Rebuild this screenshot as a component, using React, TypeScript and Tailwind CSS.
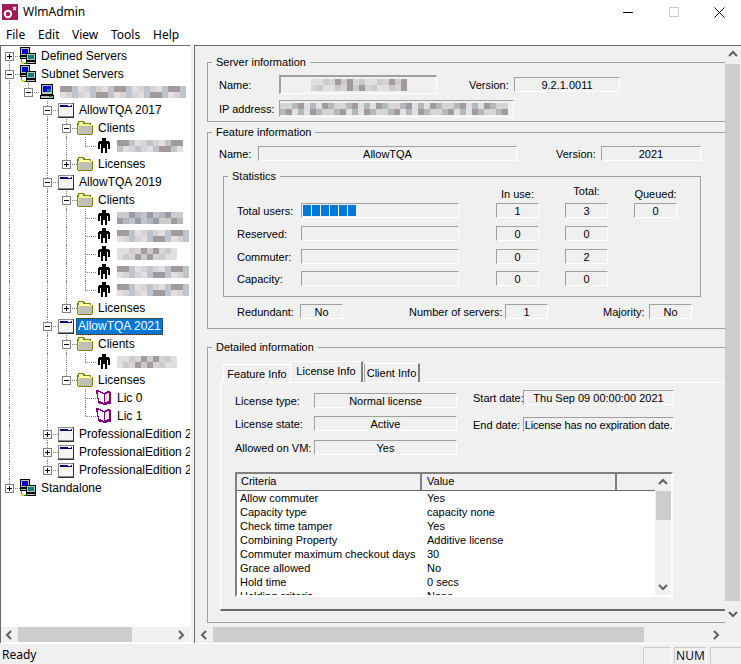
import type { ReactNode } from "react";

interface TreeNode {
	label?: string;
	blur?: number;
	icon: "network" | "computer" | "window" | "folder" | "person" | "book";
	open?: boolean;
	selected?: boolean;
	children?: TreeNode[];
}

const clientsOf = (widths: number[]): TreeNode => ({
	label: "Clients",
	icon: "folder",
	open: true,
	children: widths.map((w) => ({ blur: w, icon: "person" as const })),
});

const closedLicenses: TreeNode = { label: "Licenses", icon: "folder", children: [{ label: "x", icon: "book" }], open: false };

const pro: TreeNode = { label: "ProfessionalEdition 2", icon: "window", children: [{ label: "x", icon: "folder" }], open: false };

const tree: TreeNode[] = [
	{ label: "Defined Servers", icon: "network", children: [{ label: "x", icon: "computer" }], open: false },
	{
		label: "Subnet Servers",
		icon: "network",
		open: true,
		children: [
			{
				blur: 126,
				icon: "computer",
				open: true,
				children: [
					{ label: "AllowTQA 2017", icon: "window", open: true, children: [clientsOf([63]), closedLicenses] },
					{ label: "AllowTQA 2019", icon: "window", open: true, children: [clientsOf([65, 72, 60, 72, 72]), closedLicenses] },
					{
						label: "AllowTQA 2021",
						icon: "window",
						open: true,
						selected: true,
						children: [
							clientsOf([60]),
							{
								label: "Licenses",
								icon: "folder",
								open: true,
								children: [
									{ label: "Lic 0", icon: "book" },
									{ label: "Lic 1", icon: "book" },
								],
							},
						],
					},
					pro,
					pro,
					pro,
				],
			},
		],
	},
	{ label: "Standalone", icon: "network", children: [{ label: "x", icon: "computer" }], open: false },
];

const shades = ["#a39a9c", "#c4c0c2", "#b3b8bc", "#d8d4d6", "#9c9aa4", "#c9ccc8", "#e2dfe2", "#ada4a0", "#bfc4cc"];

function Mosaic({ width, rows = 2, size = 6 }: { width: number; rows?: number; size?: number }) {
	const cols = Math.ceil(width / size);
	const cells = [];
	for (let i = 0; i < cols * rows; i++) {
		const n = (width * 7 + i * i * 13 + i * 5) % shades.length;
		cells.push(<span key={i} style={{ backgroundColor: shades[n], width: size, height: size }} />);
	}
	return (
		<div className="flex shrink-0 flex-wrap overflow-hidden" style={{ width: cols * size }}>
			{cells}
		</div>
	);
}

function NodeIcon({ type }: { type: TreeNode["icon"] }) {
	if (type === "network") {
		return (
			<svg width="16" height="18" viewBox="0 0 16 18" shapeRendering="crispEdges" className="shrink-0">
				<rect x="1" y="9" width="1" height="6" fill="#808080" />
				<rect x="0.5" y="0.5" width="9" height="8" fill="#c0c0c0" stroke="#000" />
				<rect x="2" y="2" width="6" height="5" fill="#0000d0" />
				<rect x="0.5" y="9.5" width="9" height="2" fill="#c0c0c0" stroke="#000" />
				<rect x="6.5" y="6.5" width="9" height="7" fill="#c0c0c0" stroke="#000" />
				<rect x="8" y="8" width="6" height="4" fill="#008080" />
				<rect x="6.5" y="14.5" width="9" height="2" fill="#c0c0c0" stroke="#000" />
				<rect x="1" y="15" width="3" height="2" fill="#e8d800" />
				<rect x="4" y="16" width="3" height="1" fill="#008000" />
			</svg>
		);
	}
	if (type === "computer") {
		return (
			<svg width="16" height="16" viewBox="0 0 16 16" shapeRendering="crispEdges" className="shrink-0">
				<rect x="2.5" y="0.5" width="11" height="10" fill="#c0c0c0" stroke="#000" />
				<rect x="4" y="2" width="8" height="6" fill="#0000e0" />
				<rect x="8" y="5" width="4" height="3" fill="#008080" />
				<rect x="1.5" y="11.5" width="13" height="3" fill="#c0c0c0" stroke="#000" />
				<rect x="10" y="12" width="3" height="1" fill="#00a000" />
			</svg>
		);
	}
	if (type === "window") {
		return (
			<svg width="16" height="16" viewBox="0 0 16 16" shapeRendering="crispEdges" className="shrink-0">
				<rect x="0" y="1" width="16" height="15" fill="#303030" />
				<rect x="0" y="1" width="15" height="14" fill="#8c8c8c" />
				<rect x="1" y="2" width="14" height="12" fill="#f4f4f4" />
				<rect x="2" y="3" width="12" height="2" fill="#000080" />
				<rect x="10" y="3" width="3" height="1" fill="#ffffff" />
			</svg>
		);
	}
	if (type === "folder") {
		return (
			<svg width="16" height="16" viewBox="0 0 16 16" shapeRendering="crispEdges" className="shrink-0">
				<path d="M0 3h1V1h6v1h1v1h6v2h2v9h-1v1H1v-1H0z" fill="#808000" />
				<rect x="2" y="2" width="4" height="2" fill="#f0f0d0" />
				<rect x="2" y="4" width="11" height="1" fill="#ffff90" />
				<rect x="2" y="5" width="13" height="1" fill="#ffff90" />
				<rect x="2" y="6" width="13" height="8" fill="#c0c0b8" />
				<rect x="1" y="5" width="1" height="9" fill="#e0e0a0" />
			</svg>
		);
	}
	if (type === "person") {
		return (
			<svg width="16" height="16" viewBox="0 0 16 16" shapeRendering="crispEdges" className="shrink-0">
				<path d="M6 0h4v3h3v1h1v7h-2V6h-1v9H9v-5H7v5H5V6H4v5H2V4h1V3h3z" fill="#000" />
			</svg>
		);
	}
	return (
		<svg width="16" height="16" viewBox="0 0 16 16" shapeRendering="crispEdges" className="shrink-0">
			<path d="M0 0h3v1h2v1h2v1h2V2h2V1h3v1h1v12h-4v1H7v-1H3v-1H2V9H1V4H0z" fill="#800080" />
			<path d="M2 2h2v1h2v1h2v9H7v-1H5v-1H3V8H2z" fill="#ffffff" />
			<path d="M9 4h2V3h2v8h-2v1H9z" fill="#e4ecc0" />
		</svg>
	);
}

function TreeRows({ nodes, trail = [] }: { nodes: TreeNode[]; trail?: boolean[] }) {
	return (
		<>
			{nodes.map((node, i) => {
				const hasNext = i < nodes.length - 1;
				const hasBox = !!node.children;
				const rootFirst = trail.length === 0 && i === 0;
				return (
					<div key={i}>
						<div className="flex h-[18px] items-center">
							{trail.map((on, t) => (
								<div key={t} className="relative h-[18px] w-[19px] shrink-0">
									{on && <div className="absolute left-[9px] top-0 h-[18px] border-l border-dotted border-[#808080]" />}
								</div>
							))}
							<div className="relative h-[18px] w-[19px] shrink-0">
								{!rootFirst && <div className="absolute left-[9px] top-0 h-[9px] border-l border-dotted border-[#808080]" />}
								{hasNext && <div className="absolute left-[9px] top-[9px] h-[9px] border-l border-dotted border-[#808080]" />}
								<div className="absolute left-[9px] top-[9px] w-[11px] border-t border-dotted border-[#808080]" />
								{hasBox && (
									<div className="absolute left-[5px] top-[5px] flex h-[9px] w-[9px] items-center justify-center border border-[#808080] bg-white">
										<div className="h-px w-[5px] bg-black" />
										{!node.open && <div className="absolute h-[5px] w-px bg-black" />}
									</div>
								)}
							</div>
							<div className="ml-px">
								<NodeIcon type={node.icon} />
							</div>
							{node.blur ? (
								<div className="ml-[5px]">
									<Mosaic width={node.blur} />
								</div>
							) : (
								<span
									className={
										node.selected
											? "ml-[2px] h-[17px] whitespace-nowrap border border-dotted border-[#3a2a10] bg-[#0078d7] px-px leading-[15px] text-white"
											: "ml-[3px] whitespace-nowrap px-[2px] text-black"
									}
								>
									{node.label}
								</span>
							)}
						</div>
						{node.open && node.children && <TreeRows nodes={node.children} trail={[...trail, hasNext]} />}
					</div>
				);
			})}
		</>
	);
}

function Chevron({ dir, className = "" }: { dir: "up" | "down" | "left" | "right"; className?: string }) {
	const d = {
		up: "M1 6l4-4 4 4",
		down: "M1 3l4 4 4-4",
		left: "M7 1L3 5l4 4",
		right: "M3 1l4 4-4 4",
	}[dir];
	return (
		<svg width="10" height="10" viewBox="0 0 10 10" fill="none" stroke="#606060" strokeWidth="2" className={"shrink-0 " + className}>
			<path d={d} />
		</svg>
	);
}

function Field({ className, children }: { className: string; children?: ReactNode }) {
	return (
		<div className={"flex shrink-0 items-center justify-center overflow-hidden whitespace-nowrap border-t border-l border-t-[#a0a0a0] border-l-[#a0a0a0] border-r border-b border-r-white border-b-white " + className}>
			{children}
		</div>
	);
}

function Group({ title, className, children }: { title: string; className: string; children: ReactNode }) {
	return (
		<div className={"relative border border-[#a0a0a0] " + className}>
			<span className="absolute -top-[8px] left-[4px] whitespace-nowrap bg-[#f0f0f0] px-[4px] leading-[14px]">{title}</span>
			{children}
		</div>
	);
}

function StatRow({ label, className, bar, use, total, queued }: { label: string; className: string; bar?: number; use: string; total: string; queued?: string }) {
	return (
		<div className={"flex h-[15px] items-center pl-[13px] " + className}>
			<span className="w-[64px] shrink-0 whitespace-nowrap">{label}</span>
			<Field className="h-[15px] w-[158px] !justify-start gap-px pl-px">
				{Array.from({ length: bar ?? 0 }).map((_, i) => (
					<div key={i} className="h-[11px] w-[8px] bg-[#0078d7]" />
				))}
			</Field>
			<Field className="ml-[37px] h-[15px] w-[43px]">{use}</Field>
			<Field className="ml-[26px] h-[15px] w-[43px]">{total}</Field>
			{queued && <Field className="ml-[26px] h-[15px] w-[43px]">{queued}</Field>}
		</div>
	);
}

const criteria = [
	["Allow commuter", "Yes"],
	["Capacity type", "capacity none"],
	["Check time tamper", "Yes"],
	["Combining Property", "Additive license"],
	["Commuter maximum checkout days", "30"],
	["Grace allowed", "No"],
	["Hold time", "0 secs"],
	["Holding criteria", "None"],
];

export default function App() {
	return (
		<div className="flex h-[664px] w-[741px] flex-col overflow-hidden bg-[#f0f0f0] font-['Liberation_Sans',Arial,sans-serif] text-[12px] text-black">
			{/* title bar */}
			<div className="flex h-[24px] shrink-0 items-center bg-white pl-[2px]">
				<svg width="16" height="16" viewBox="0 0 16 16" className="shrink-0">
					<rect width="16" height="16" fill="#a3195b" />
					<circle cx="6" cy="10" r="3.2" fill="none" stroke="#fff" strokeWidth="2" />
					<path d="M11 3l3 3M14 3l-3 3" stroke="#fff" strokeWidth="1.2" />
				</svg>
				<span className="ml-[5px] font-['Noto_Sans',sans-serif] text-[12px]">WlmAdmin</span>
				<svg width="11" height="11" viewBox="0 0 11 11" className="ml-[538px] shrink-0">
					<path d="M0 5.5h10" stroke="#000" />
				</svg>
				<div className="ml-[35px] h-[10px] w-[10px] border border-[#cccccc]" />
				<svg width="11" height="11" viewBox="0 0 11 11" className="ml-[35px] shrink-0">
					<path d="M.5.5l10 10M10.5.5l-10 10" stroke="#000" />
				</svg>
			</div>
			{/* menu */}
			<div className="flex h-[21px] shrink-0 items-center bg-white pt-px font-['Noto_Sans',sans-serif] text-[12px]">
				<span className="ml-[6px] w-[32px]">File</span>
				<span className="w-[34px]">Edit</span>
				<span className="w-[39px]">View</span>
				<span className="w-[42px]">Tools</span>
				<span>Help</span>
			</div>
			{/* panes */}
			<div className="flex h-[599px] shrink-0 border-b border-white">
				<div className="flex w-[191px] shrink-0 flex-col border-t border-l border-r border-t-[#696969] border-l-[#696969] border-r-white bg-white">
					<div className="-ml-px h-[581px] overflow-hidden pt-px">
						<TreeRows nodes={tree} />
					</div>
					<div className="flex h-[15px] shrink-0 items-center bg-[#f0f0f0]">
						<Chevron dir="left" className="ml-[3px]" />
						<div className="ml-[4px] h-[15px] w-[114px] bg-[#cdcdcd]" />
						<Chevron dir="right" className="ml-[44px]" />
					</div>
				</div>
				<div className="ml-[3px] flex min-w-0 flex-1 flex-col border-t border-l border-[#696969] text-[11px] leading-[14px]">
					<div className="flex h-[581px] shrink-0">
						<div className="w-[530px] shrink-0 overflow-hidden">
							<Group title="Server information" className="ml-[12px] mt-[16px] h-[60px] w-[540px]">
								<div className="flex items-center pl-[11px] pt-[12px]">
									<span className="w-[60px]">Name:</span>
									<Field className="h-[19px] w-[158px] border-t-2 border-l-2 border-t-[#808080] border-l-[#808080]">
										<Mosaic width={96} size={6} />
									</Field>
									<span className="ml-[32px] w-[45px]">Version:</span>
									<Field className="h-[15px] w-[106px]">9.2.1.0011</Field>
								</div>
								<div className="mt-[6px] flex items-center pl-[11px]">
									<span className="w-[60px] whitespace-nowrap">IP address:</span>
									<Field className="h-[17px] w-[235px] !justify-start">
										<Mosaic width={228} rows={2} size={6} />
									</Field>
								</div>
							</Group>
							<Group title="Feature information" className="ml-[12px] mt-[10px] h-[197px] w-[540px]">
								<div className="flex items-center pl-[11px] pt-[13px]">
									<span className="w-[39px]">Name:</span>
									<Field className="h-[15px] w-[259px]">AllowTQA</Field>
									<span className="ml-[39px] w-[45px]">Version:</span>
									<Field className="h-[15px] w-[100px]">2021</Field>
								</div>
								<Group title="Statistics" className="ml-[15px] mt-[15px] h-[121px] w-[478px]">
									<div className="ml-[272px] flex h-[26px] items-start">
										<span className="mt-[10px] w-[43px] text-center">In use:</span>
										<span className="ml-[26px] mt-[7px] w-[43px] text-center">Total:</span>
										<span className="ml-[26px] mt-[10px] w-[43px] text-center">Queued:</span>
									</div>
									<StatRow label="Total users:" className="" bar={6} use="1" total="3" queued="0" />
									<StatRow label="Reserved:" className="mt-[8px]" use="0" total="0" />
									<StatRow label="Commuter:" className="mt-[8px]" use="0" total="2" />
									<StatRow label="Capacity:" className="mt-[7px]" use="0" total="0" />
								</Group>
								<div className="mt-[7px] flex items-center pl-[29px]">
									<span className="w-[63px]">Redundant:</span>
									<Field className="h-[15px] w-[43px]">No</Field>
									<span className="ml-[66px] w-[96px] whitespace-nowrap">Number of servers:</span>
									<Field className="h-[15px] w-[43px]">1</Field>
									<span className="ml-[55px] w-[46px]">Majority:</span>
									<Field className="h-[15px] w-[43px]">No</Field>
								</div>
							</Group>
							<Group title="Detailed information" className="ml-[12px] mt-[18px] h-[276px] w-[540px]">
								<div className="ml-[15px] mt-[13px] flex h-[21px] items-end">
									<div className="flex h-[18px] w-[67px] items-center justify-center border-t border-l border-white">Feature Info</div>
									<div className="flex h-[21px] w-[73px] items-center justify-center border-t border-l border-r-2 border-t-white border-l-white border-r-[#808080] pb-[2px]">License Info</div>
									<div className="ml-px flex h-[19px] w-[56px] items-center justify-center whitespace-nowrap border-l border-r-2 border-t border-l-[#a0a0a0] border-r-[#808080] border-t-white">Client Info</div>
								</div>
								<div className="ml-[12px] h-[229px] border-t border-l border-b-2 border-t-white border-l-white border-b-[#696969]">
									<div className="flex h-[89px]">
										<div className="ml-[14px] w-[222px] pt-[10px]">
											<div className="flex items-center">
												<span className="w-[79px] whitespace-nowrap">License type:</span>
												<Field className="h-[15px] w-[143px]">Normal license</Field>
											</div>
											<div className="mt-[8px] flex items-center">
												<span className="w-[79px] whitespace-nowrap">License state:</span>
												<Field className="h-[15px] w-[143px]">Active</Field>
											</div>
											<div className="mt-[9px] flex items-center">
												<span className="w-[79px] whitespace-nowrap">Allowed on VM:</span>
												<Field className="h-[15px] w-[143px]">Yes</Field>
											</div>
										</div>
										<div className="ml-[16px] pt-[7px]">
											<div className="flex items-center">
												<span className="w-[50px] whitespace-nowrap">Start date:</span>
												<Field className="h-[15px] w-[151px]">Thu Sep 09 00:00:00 2021</Field>
											</div>
											<div className="mt-[12px] flex items-center">
												<span className="w-[50px] whitespace-nowrap">End date:</span>
												<Field className="h-[15px] w-[151px] tracking-[-0.15px]">License has no expiration date.</Field>
											</div>
										</div>
									</div>
									<div className="ml-[14px] flex h-[125px] w-[438px] border-t-2 border-l-2 border-b-2 border-r-2 border-t-[#808080] border-l-[#808080] border-b-white border-r-white">
										<div className="w-[418px] shrink-0 overflow-hidden bg-white">
											<div className="flex h-[17px] border-b border-[#696969] bg-[#f0f0f0]">
												<div className="w-[185px] border-r-2 border-[#808080] pl-[4px] leading-[15px]">Criteria</div>
												<div className="w-[195px] border-r-2 border-[#808080] pl-[5px] leading-[15px]">Value</div>
											</div>
											{criteria.map(([name, value]) => (
												<div key={name} className="flex h-[14px] leading-[14px]">
													<span className="w-[185px] shrink-0 whitespace-nowrap pl-[3px]">{name}</span>
													<span className="pl-[5px]">{value}</span>
												</div>
											))}
										</div>
										<div className="flex w-[16px] shrink-0 flex-col items-center bg-[#f0f0f0]">
											<div className="flex h-[17px] items-center">
												<Chevron dir="up" />
											</div>
											<div className="h-[29px] w-[15px] bg-[#cdcdcd]" />
											<div className="mt-auto flex h-[17px] items-center">
												<Chevron dir="down" />
											</div>
										</div>
									</div>
								</div>
							</Group>
						</div>
						<div className="flex w-[15px] shrink-0 flex-col items-center bg-[#f0f0f0]">
							<div className="flex h-[18px] items-center">
								<Chevron dir="up" />
							</div>
							<div className="h-[537px] w-[15px] bg-[#cdcdcd]" />
							<div className="flex flex-1 items-center">
								<Chevron dir="down" />
							</div>
						</div>
					</div>
					<div className="flex h-[15px] shrink-0 items-center">
						<Chevron dir="left" className="ml-[4px]" />
						<div className="ml-[4px] h-[15px] w-[431px] bg-[#cdcdcd]" />
						<Chevron dir="right" className="ml-[67px]" />
					</div>
				</div>
			</div>
			{/* status bar */}
			<div className="flex flex-1 items-end">
				<span className="ml-[2px] font-['Noto_Sans',sans-serif] text-[12px] leading-[18px]">Ready</span>
				<div className="ml-auto flex h-[17px]">
					<div className="w-[28px] border border-[#cccccc] border-r-white border-b-0" />
					<div className="ml-[3px] flex w-[33px] items-center justify-center border border-[#cccccc] border-b-0 border-r-white font-['Noto_Sans',sans-serif] text-[12px] text-[#101030]">NUM</div>
					<div className="ml-[3px] w-[31px] border-t border-l border-[#cccccc]" />
				</div>
			</div>
		</div>
	);
}
